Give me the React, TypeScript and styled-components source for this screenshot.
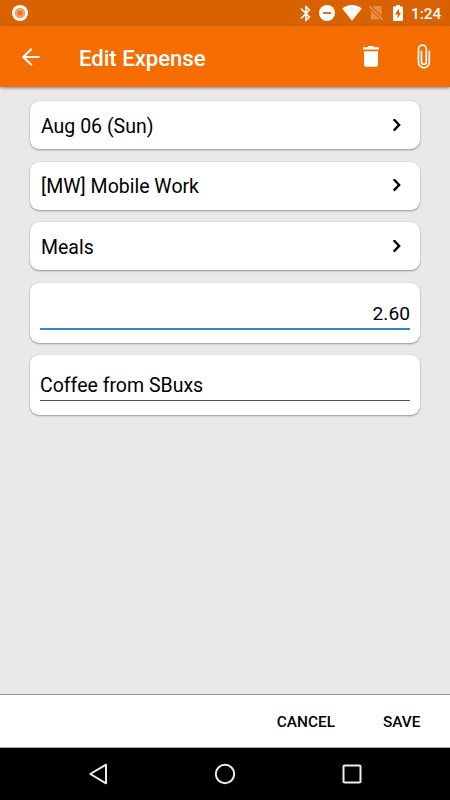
import React from 'react';
import styled, { createGlobalStyle } from 'styled-components';

const GlobalStyle = createGlobalStyle`
  * { box-sizing: border-box; }
  body { margin: 0; font-family: Roboto, sans-serif; color: #000; }
  svg { display: block; flex: none; }
`;

const Screen = styled.div`
  width: 450px;
  height: 800px;
  display: flex;
  flex-direction: column;
  background: #e9e9e9;
  overflow: hidden;
`;

const StatusBar = styled.header`
  height: 26px;
  flex: none;
  display: flex;
  align-items: center;
  padding: 0 9px 0 12px;
  background: #d96200;
  color: #fff;
`;

const StatusIcons = styled.div`
  height: 26px;
  margin-left: auto;
  display: flex;
  align-items: center;
`;

const Slot = styled.span<{ $gap: number }>`
  margin-left: ${(p) => p.$gap}px;
`;

const Clock = styled.span`
  width: 30px;
  margin-left: 8px;
  font-size: 15.4px;
  line-height: 26px;
  text-align: right;
  font-weight: 500;
  padding-top: 2px;
`;

const AppBar = styled.nav`
  height: 61px;
  flex: none;
  display: flex;
  align-items: center;
  padding: 0 15px 0 21px;
  background: #f56d00;
  color: #fff;
  box-shadow: 0 1px 3px rgba(0, 0, 0, 0.45);
  z-index: 1;
`;

const Title = styled.h1`
  flex: 1;
  margin: 3px 0 0 38px;
  font-size: 22.1px;
  line-height: 28px;
  font-weight: 500;
`;

const IconButton = styled.button<{ $gap?: number }>`
  padding: 0;
  border: 0;
  background: none;
  color: inherit;
  margin-left: ${(p) => p.$gap ?? 0}px;
`;

const Form = styled.main`
  flex: 1;
  display: flex;
  flex-direction: column;
  gap: 12.5px;
  padding: 14.2px 30px 0;
`;

const Card = styled.section`
  background: #fff;
  border-radius: 9px;
  box-shadow: 0 1px 2px rgba(0, 0, 0, 0.36), 0 0 1px rgba(0, 0, 0, 0.16);
`;

const PickerCard = styled(Card)`
  height: 48px;
  display: flex;
  align-items: center;
  justify-content: space-between;
  padding: 1.4px 18px 0 11px;
`;

const Label = styled.span`
  padding-top: 2px;
  font-size: 19.5px;
  line-height: 24px;
`;

const FieldCard = styled(Card)`
  height: 60px;
  padding: 16px 10px 0;
`;

const Field = styled.div<{ $active?: boolean }>`
  height: ${(p) => (p.$active ? 31 : 30)}px;
  padding-top: ${(p) => (p.$active ? 3.4 : 2.4)}px;
  font-size: ${(p) => (p.$active ? 19.2 : 19.5)}px;
  line-height: 24px;
  text-align: ${(p) => (p.$active ? 'right' : 'left')};
  border-bottom: ${(p) => (p.$active ? '2px solid #2f8acb' : '1px solid #555')};
`;

const Footer = styled.footer`
  height: 54px;
  flex: none;
  display: flex;
  align-items: center;
  justify-content: flex-end;
  gap: 48px;
  padding: 2px 29.5px 0 0;
  background: #fff;
  border-top: 1px solid #8f8f8f;
  border-bottom: 1px solid #aaa;
`;

const Action = styled.button`
  padding: 0;
  border: 0;
  background: none;
  font: 500 15.4px/20px Roboto, sans-serif;
  color: #000;
`;

const SystemNav = styled.nav`
  height: 52px;
  flex: none;
  display: grid;
  grid-template-columns: repeat(3, 22px);
  column-gap: 105px;
  justify-content: center;
  align-items: center;
`;

const NavStrip = styled.div`
  background: #000;
`;

const Chevron = () => (
  <svg width="10" height="14" viewBox="0 0 10 14" fill="none" stroke="#000" strokeWidth="2.3">
    <path d="M1.7 0.2 7.2 5.9 1.7 11.6" />
  </svg>
);

const pickers = ['Aug 06 (Sun)', '[MW] Mobile Work', 'Meals'];

export default function App() {
  return (
    <>
      <GlobalStyle />
      <Screen>
        <StatusBar>
          <svg width="16" height="16" viewBox="0 0 16 16">
            <circle cx="8" cy="8" r="8" fill="#fff" />
            <circle cx="8" cy="8" r="5.3" fill="#efa265" />
            <circle cx="8" cy="8" r="2.6" fill="#df7a2c" />
          </svg>
          <StatusIcons>
            <svg width="19" height="19" viewBox="-0.6 0 24 24" fill="#fff">
              <path d="M17.71 7.71L12 2h-1v7.59L6.41 5 5 6.41 10.59 12 5 17.59 6.41 19 11 14.41V22h1l5.71-5.71-4.3-4.29 4.3-4.29zM13 5.83l1.88 1.88L13 9.59V5.83zm1.88 10.46L13 18.17v-3.76l1.88 1.88z" />
            </svg>
            <Slot $gap={4}>
              <svg width="16" height="16" viewBox="0 0 16 16">
                <circle cx="8" cy="8" r="8" fill="#fff" />
                <path d="M4 8h8" stroke="#d96200" strokeWidth="1.8" />
              </svg>
            </Slot>
            <Slot $gap={7}>
              <svg width="20" height="16" viewBox="0 0 20 16" fill="#fff">
                <path d="M10 15.8 0.2 3.5C2.7 1.4 6 0 10 0s7.3 1.4 9.8 3.5z" />
              </svg>
            </Slot>
            <Slot $gap={7}>
              <svg width="15" height="16" viewBox="0 0 15 16">
                <path d="M5.2 1h6.3a1.2 1.2 0 0 1 1.2 1.2v8.600L4 2.2zM1.8 5 11.200 14.500H3a1.2 1.2 0 0 1-1.2-1.2z" fill="#e38d48" />
                <path d="M0.7 1.5 14 15" stroke="#e59a5c" strokeWidth="1.2" />
              </svg>
            </Slot>
            <Slot $gap={9}>
              <svg width="10" height="16" viewBox="0 0 10 16">
                <path d="M3 0h4v1.5h2a1 1 0 0 1 1 1V15a1 1 0 0 1-1 1H1a1 1 0 0 1-1-1V2.5a1 1 0 0 1 1-1h2z" fill="#fff" />
                <path d="M6 3.5 2 9.3h2.5v4.2L8 7.7H6z" fill="#d96200" />
              </svg>
            </Slot>
            <Clock>1:24</Clock>
          </StatusIcons>
        </StatusBar>
        <AppBar>
          <IconButton aria-label="Back">
            <svg width="20" height="20" viewBox="0 0 20 20" fill="none" stroke="#fff" strokeWidth="2">
              <path d="M18.6 10H2.5M10.8 1.8 2.3 10l8.5 8.2" />
            </svg>
          </IconButton>
          <Title>Edit Expense</Title>
          <IconButton aria-label="Delete">
            <svg width="16" height="21" viewBox="0 0 16 21" fill="#fff">
              <path d="M1 5.3h14v13.4a2 2 0 0 1-2 2H3a2 2 0 0 1-2-2zM0 1.2h4.6L5.6 0h4.8l1 1.2H16v2.4H0z" />
            </svg>
          </IconButton>
          <IconButton aria-label="Attach file" $gap={36}>
            <svg width="20" height="26" viewBox="0.6 0.3 20 26" fill="none" stroke="#fff" strokeWidth="1.7">
              <path d="M14.9 6.7v12a5.4 5.4 0 0 1-10.8 0V5.4a3.9 3.9 0 0 1 7.8 0v12.9a2.4 2.4 0 0 1-4.8 0V6.7" />
            </svg>
          </IconButton>
        </AppBar>
        <Form>
          {pickers.map((text) => (
            <PickerCard key={text}>
              <Label>{text}</Label>
              <Chevron />
            </PickerCard>
          ))}
          <FieldCard>
            <Field $active>2.60</Field>
          </FieldCard>
          <FieldCard>
            <Field>Coffee from SBuxs</Field>
          </FieldCard>
        </Form>
        <Footer>
          <Action>CANCEL</Action>
          <Action>SAVE</Action>
        </Footer>
        <NavStrip>
          <SystemNav>
            <svg width="22" height="22" viewBox="-1 0 22 22" fill="none" stroke="#eee" strokeWidth="2" strokeLinejoin="round">
              <path d="M18 1.7v18.6L2.3 11z" />
            </svg>
            <svg width="22" height="22" viewBox="0 0 22 22" fill="none" stroke="#eee" strokeWidth="2">
              <circle cx="11" cy="11" r="9.2" />
            </svg>
            <svg width="22" height="22" viewBox="0 0 22 22" fill="none" stroke="#eee" strokeWidth="2">
              <rect x="2.5" y="2.5" width="17" height="17" rx="1" />
            </svg>
          </SystemNav>
        </NavStrip>
      </Screen>
    </>
  );
}
